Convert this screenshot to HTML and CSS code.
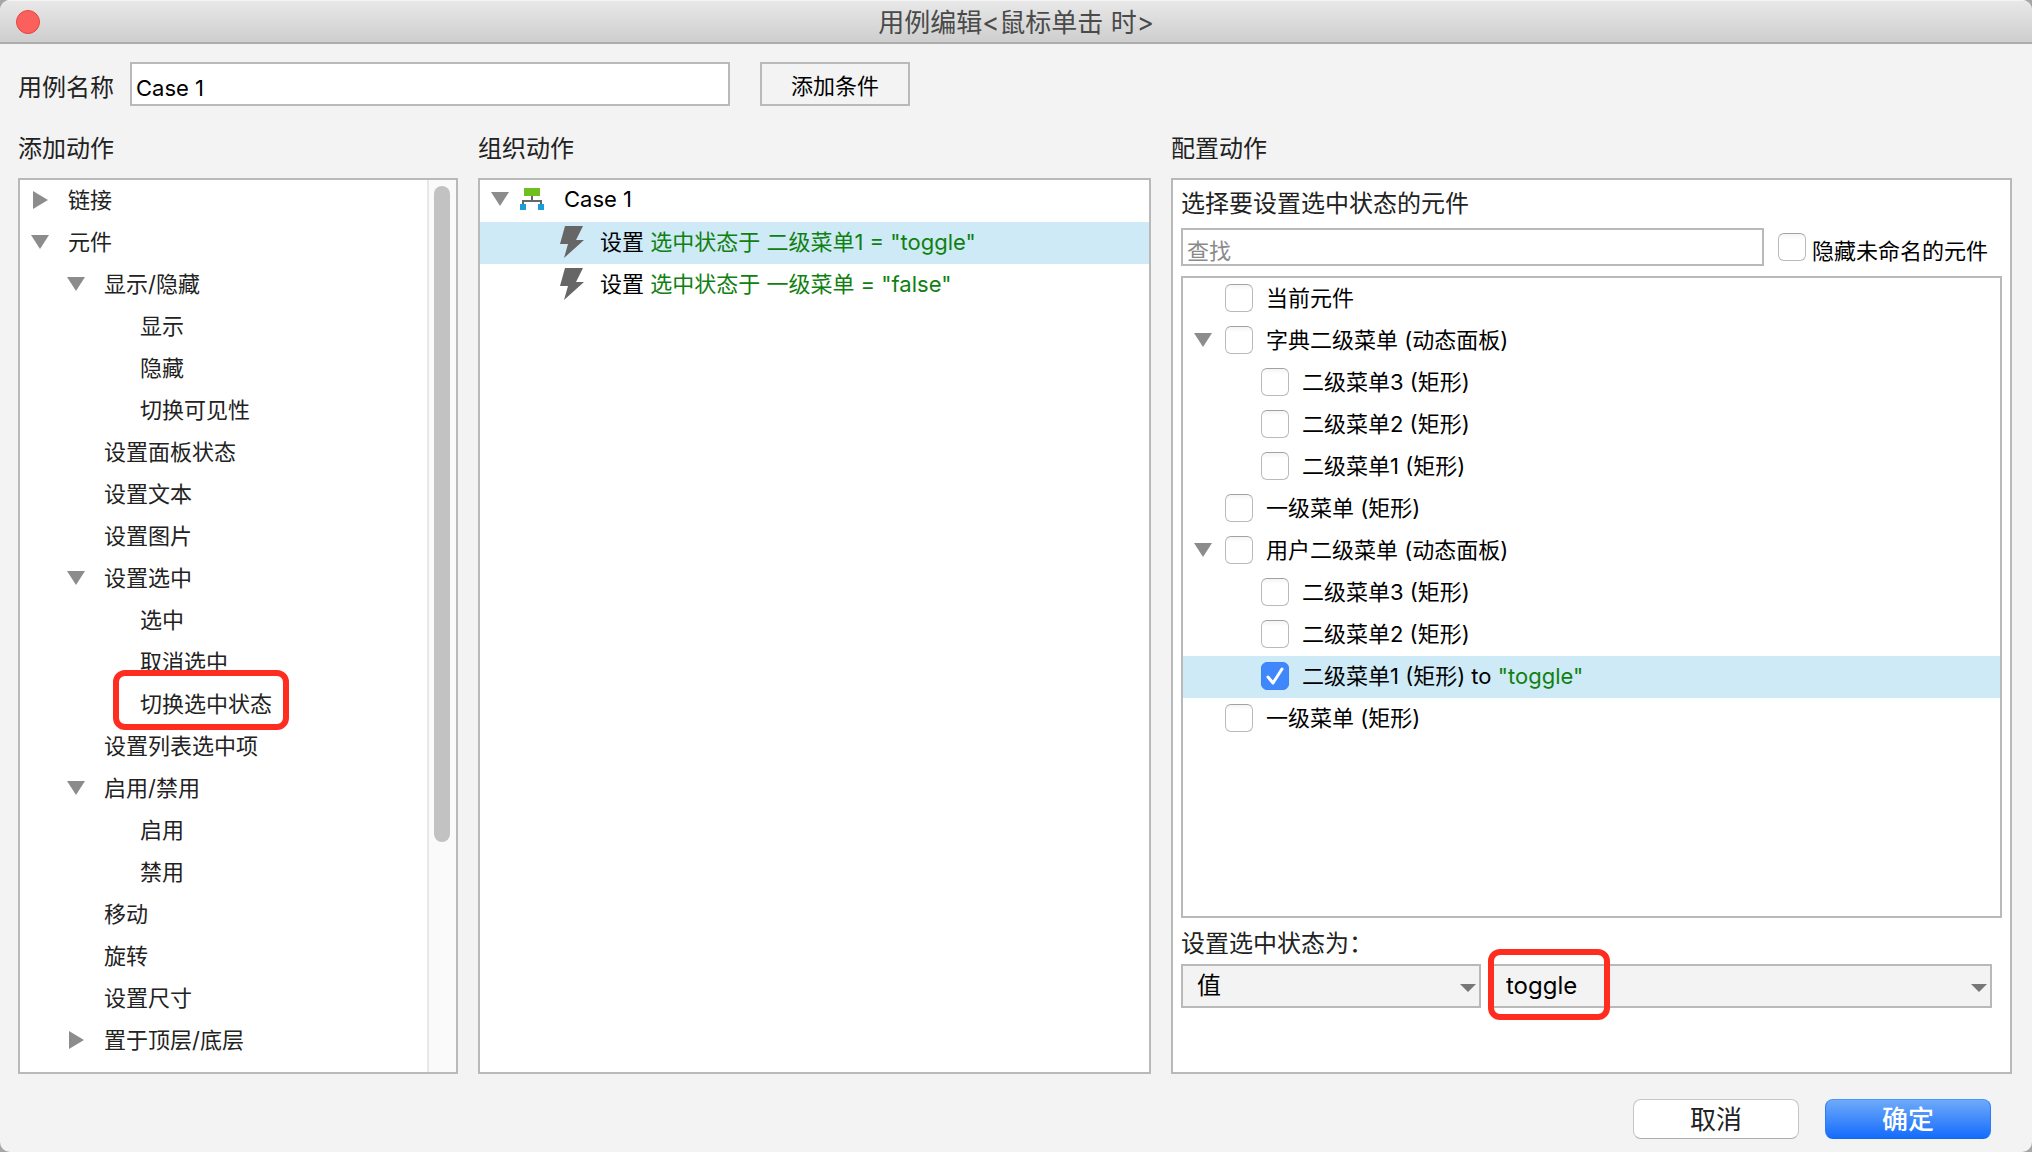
FILE: index.html
```html
<!DOCTYPE html>
<html lang="zh-CN">
<head>
<meta charset="utf-8">
<title>用例编辑</title>
<link rel="stylesheet" href="styles.css">
</head>
<body>
<svg class="defs" aria-hidden="true">
  <symbol id="down" viewBox="0 0 18 18"><path d="M0 2h18L9 16z"/></symbol>
  <symbol id="right" viewBox="0 0 18 18"><path d="M2 0v18l15-9z"/></symbol>
  <symbol id="caret" viewBox="0 0 16 8"><path d="M0 0h16L8 8z"/></symbol>
  <symbol id="bolt" viewBox="0 0 24 32"><path d="M5 0h18l-7 14h8L4 32l4-14H0z"/></symbol>
</svg>
<main class="dialog">
  <header class="titlebar">
    <button class="close" type="button" aria-label="关闭"></button>
    <h1>用例编辑&lt;鼠标单击 时&gt;</h1>
  </header>

  <div class="name-row">
    <label for="case-name">用例名称</label>
    <input id="case-name" class="field" type="text" value="Case 1">
    <button class="flat" type="button">添加条件</button>
  </div>

  <div class="columns">
    <section class="column">
      <h2>添加动作</h2>
      <div class="panel actions">
        <ul class="tree">
          <li><div class="row"><button class="twisty" aria-label="展开"><svg><use href="#right"/></svg></button>链接</div></li>
          <li><div class="row"><button class="twisty" aria-label="折叠"><svg><use href="#down"/></svg></button>元件</div>
            <ul>
              <li><div class="row"><button class="twisty" aria-label="折叠"><svg><use href="#down"/></svg></button>显示/隐藏</div>
                <ul>
                  <li><div class="row leaf">显示</div></li>
                  <li><div class="row leaf">隐藏</div></li>
                  <li><div class="row leaf">切换可见性</div></li>
                </ul>
              </li>
              <li><div class="row leaf">设置面板状态</div></li>
              <li><div class="row leaf">设置文本</div></li>
              <li><div class="row leaf">设置图片</div></li>
              <li><div class="row"><button class="twisty" aria-label="折叠"><svg><use href="#down"/></svg></button>设置选中</div>
                <ul>
                  <li><div class="row leaf">选中</div></li>
                  <li><div class="row leaf">取消选中</div></li>
                  <li><div class="row leaf"><span class="marked">切换选中状态</span></div></li>
                </ul>
              </li>
              <li><div class="row leaf">设置列表选中项</div></li>
              <li><div class="row"><button class="twisty" aria-label="折叠"><svg><use href="#down"/></svg></button>启用/禁用</div>
                <ul>
                  <li><div class="row leaf">启用</div></li>
                  <li><div class="row leaf">禁用</div></li>
                </ul>
              </li>
              <li><div class="row leaf">移动</div></li>
              <li><div class="row leaf">旋转</div></li>
              <li><div class="row leaf">设置尺寸</div></li>
              <li><div class="row"><button class="twisty" aria-label="展开"><svg><use href="#right"/></svg></button>置于顶层/底层</div></li>
            </ul>
          </li>
        </ul>
        <div class="scrollbar"><div class="thumb"></div></div>
      </div>
    </section>

    <section class="column">
      <h2>组织动作</h2>
      <div class="panel">
        <ul class="cases">
          <li class="case"><button class="twisty" aria-label="折叠"><svg><use href="#down"/></svg></button>
            <svg class="case-icon" viewBox="0 0 24 22" aria-hidden="true"><path fill="#70bf1f" d="M4 0h16v8H4z"/><path fill="none" stroke="#666" stroke-width="2" d="M12 8v5M3 17v-4h18v4"/><path fill="#1c9cd8" d="M0 16h6v6H0zM18 16h6v6h-6z"/></svg>
            <span>Case 1</span></li>
          <li class="step selected"><svg class="bolt" aria-hidden="true"><use href="#bolt"/></svg><span>设置 <span class="value">选中状态于 二级菜单1 = "toggle"</span></span></li>
          <li class="step"><svg class="bolt" aria-hidden="true"><use href="#bolt"/></svg><span>设置 <span class="value">选中状态于 一级菜单 = "false"</span></span></li>
        </ul>
      </div>
    </section>

    <section class="column">
      <h2>配置动作</h2>
      <div class="panel config">
        <h3>选择要设置选中状态的元件</h3>
        <div class="search-row">
          <input class="field search" type="text" placeholder="查找" aria-label="查找">
          <label class="hide-unnamed"><input class="check" type="checkbox"><span>隐藏未命名的元件</span></label>
        </div>
        <ul class="widgets">
          <li><span class="spacer"></span><label><input class="check" type="checkbox">当前元件</label></li>
          <li><button class="twisty" aria-label="折叠"><svg><use href="#down"/></svg></button><label><input class="check" type="checkbox">字典二级菜单 (动态面板)</label></li>
          <li class="child"><span class="spacer"></span><label><input class="check" type="checkbox">二级菜单3 (矩形)</label></li>
          <li class="child"><span class="spacer"></span><label><input class="check" type="checkbox">二级菜单2 (矩形)</label></li>
          <li class="child"><span class="spacer"></span><label><input class="check" type="checkbox">二级菜单1 (矩形)</label></li>
          <li><span class="spacer"></span><label><input class="check" type="checkbox">一级菜单 (矩形)</label></li>
          <li><button class="twisty" aria-label="折叠"><svg><use href="#down"/></svg></button><label><input class="check" type="checkbox">用户二级菜单 (动态面板)</label></li>
          <li class="child"><span class="spacer"></span><label><input class="check" type="checkbox">二级菜单3 (矩形)</label></li>
          <li class="child"><span class="spacer"></span><label><input class="check" type="checkbox">二级菜单2 (矩形)</label></li>
          <li class="child selected"><span class="spacer"></span><label><span class="tick"><input class="check" type="checkbox" checked><svg viewBox="0 0 28 28" aria-hidden="true"><path d="M7 15l5 6 9-14"/></svg></span><span>二级菜单1 (矩形) to <span class="value">"toggle"</span></span></label></li>
          <li><span class="spacer"></span><label><input class="check" type="checkbox">一级菜单 (矩形)</label></li>
        </ul>
        <h3 class="state-label" id="state-label">设置选中状态为：</h3>
        <div class="selects">
          <div class="select kind"><select aria-labelledby="state-label"><option>值</option></select><svg aria-hidden="true"><use href="#caret"/></svg></div>
          <div class="select state"><select aria-labelledby="state-label"><option>toggle</option></select><svg aria-hidden="true"><use href="#caret"/></svg></div>
        </div>
      </div>
    </section>
  </div>

  <footer class="footer">
    <button class="push" type="button">取消</button>
    <button class="push primary" type="button">确定</button>
  </footer>
</main>
</body>
</html>
```
FILE: styles.css
```css
*, *::after { box-sizing: border-box; }

body {
  margin: 0;
  background: #a6a6a6;
  color: #000;
  font: 22px/42px Inter, "Noto Sans CJK SC", sans-serif;
}

button, input, select { font: inherit; color: inherit; margin: 0; border-radius: 0; }
ul { list-style: none; margin: 0; padding: 0; }
h1, h2, h3 { margin: 0; font-weight: 400; }
.defs { position: absolute; width: 0; height: 0; }

.dialog {
  display: flex;
  flex-direction: column;
  min-height: 100vh;
  background: #f3f3f3;
  border-radius: 10px;
  overflow: hidden;
}

/* Title bar */
.titlebar {
  display: grid;
  grid-template-columns: 24px 1fr 24px;
  align-items: center;
  height: 44px;
  padding: 0 16px;
  background: linear-gradient(#e8e8e8, #cecece);
  border-top: 1px solid #f4f4f4;
  border-bottom: 2px solid #acacac;
}
.titlebar h1 { padding-top: 2px; font-size: 26px; line-height: 40px; color: #4a4a4a; text-align: center; }
.close { width: 24px; height: 24px; padding: 0; border: 1px solid #e2463f; border-radius: 50%; background: #fc605c; }

/* Case name */
.name-row { display: flex; align-items: flex-start; height: 66px; padding: 18px 18px 0; }
.name-row label { width: 112px; padding-top: 5px; font-size: 24px; line-height: 42px; color: #222; }
.field { border: 2px solid #b9b9b9; background: #fff; padding: 8px 4px 0; outline: 0; }
.name-row .field { width: 600px; height: 44px; }
.flat { width: 150px; height: 44px; margin-left: 30px; padding: 4px 0 0; line-height: 36px; border: 2px solid #b9b9b9; background: #f3f3f3; }

/* Three columns */
.columns { flex: 1; display: grid; grid-template-columns: 440fr 673fr 841fr; gap: 20px; padding: 18px 20px 0 18px; }
.column { display: flex; flex-direction: column; min-width: 0; }
.column h2 { height: 50px; font-size: 24px; line-height: 42px; color: #222; }
.panel { flex: 1; border: 2px solid #b9b9b9; background: #fff; }

.twisty { flex: none; display: flex; width: 18px; height: 18px; padding: 0; border: 0; background: none; }
.twisty svg { width: 18px; height: 18px; fill: #8c8c8c; }

/* Action tree */
.actions { display: flex; justify-content: space-between; color: #222; }
.tree { padding-left: 11px; }
.tree ul { padding-left: 36px; }
.row { display: flex; align-items: center; gap: 19px; height: 42px; padding-bottom: 2px; line-height: 40px; }
.leaf { padding-left: 37px; }
.marked { position: relative; }
.marked::after {
  content: "";
  position: absolute;
  inset: -14px -17px -6px -27px;
  border: 6px solid #ff2d1f;
  border-radius: 12px;
}
.scrollbar { width: 29px; padding: 6px 5px 0; background: #fafafa; border-left: 2px solid #e8e8e8; }
.thumb { width: 16px; height: 74%; border-radius: 8px; background: #c2c2c2; }

/* Organised cases */
.case, .step { display: flex; align-items: center; height: 42px; }
.case { padding: 0 0 4px 11px; line-height: 38px; }
.case-icon { width: 24px; height: 22px; margin: 0 20px 0 11px; }
.step { padding: 0 0 2px 80px; gap: 16px; line-height: 40px; }
.bolt { width: 24px; height: 32px; fill: #666; }
.selected { background: #cdeaf6; }
.value { color: #108010; }

/* Configuration */
.config { display: flex; flex-direction: column; padding: 2px 8px 64px; }
.config h3 { height: 46px; font-size: 24px; line-height: 44px; color: #222; }
.config .state-label { line-height: 52px; }
.search-row { display: flex; gap: 14px; height: 48px; }
.search { flex: 1; height: 38px; min-width: 0; }
.search::placeholder { color: #8a8a8a; opacity: 1; }
.hide-unnamed { display: flex; gap: 6px; padding: 5px 14px 0 0; line-height: 36px; }
.check {
  flex: none;
  display: block;
  appearance: none;
  width: 28px;
  height: 28px;
  border: 1px solid #bababa;
  border-top-color: #a2a2a2;
  border-radius: 6px;
  background: linear-gradient(#f4f4f4, #fff 20%);
}
.check:checked { border-color: #3b84f7; background: #3f87fa; }
.tick { display: grid; }
.tick > * { grid-area: 1 / 1; }
.tick svg { width: 28px; height: 28px; fill: none; stroke: #fff; stroke-width: 3; stroke-linecap: round; stroke-linejoin: round; }

.widgets { flex: 1; border: 2px solid #b9b9b9; }
.widgets li { display: flex; align-items: center; gap: 13px; height: 42px; padding: 0 0 2px 11px; line-height: 40px; }
.widgets .child { padding-left: 47px; }
.widgets label { display: flex; align-items: center; gap: 13px; }
.spacer { width: 18px; }

.selects { display: flex; gap: 9px; padding-right: 10px; }
.select { position: relative; height: 44px; }
.kind { flex: 300; }
.state { flex: 502; }
.select select { width: 100%; height: 44px; padding: 0 14px; border: 2px solid #b9b9b9; background: #f3f3f3; appearance: none; font-size: 24px; line-height: 40px; }
.select svg { position: absolute; right: 5px; top: 20px; width: 16px; height: 8px; fill: #777; }
.state::after {
  content: "";
  position: absolute;
  left: -2px;
  top: -15px;
  width: 122px;
  height: 71px;
  border: 6px solid #ff2d1f;
  border-radius: 12px;
}

/* Footer */
.footer { display: flex; justify-content: flex-end; gap: 26px; height: 78px; padding: 25px 41px 0 0; }
.push { width: 166px; height: 40px; padding: 2px 0 0; border: 1px solid #c6c6c6; border-bottom-color: #aeaeae; border-radius: 8px; background: #fff; color: #222; font-size: 26px; line-height: 36px; }
.primary { border-color: #4a94fb #2b7cf8 #1268f5; background: linear-gradient(#6faafa, #146cfc); color: #fff; font-weight: 500; }
```
